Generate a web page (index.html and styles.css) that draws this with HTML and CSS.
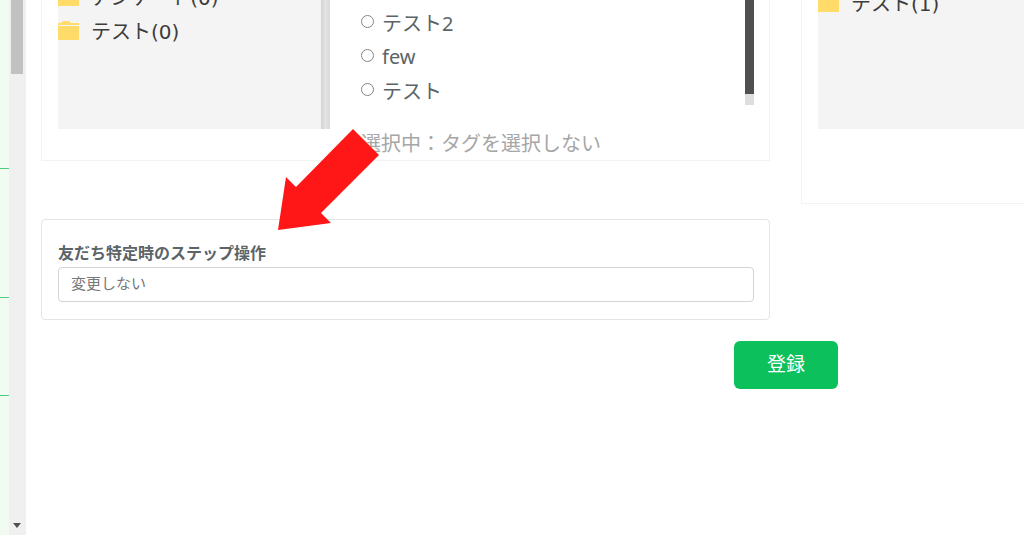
FILE: index.html
```html
<!DOCTYPE html>
<html lang="ja">
<head>
<meta charset="utf-8">
<title>友だち特定時の設定</title>
<link rel="stylesheet" href="styles.css">
</head>
<body>
<div class="app">
  <aside class="sidebar">
    <div class="side-item side-first"></div>
    <div class="side-item side-second"></div>
    <div class="side-item side-third"></div>
  </aside>
  <div class="page-scroll">
    <div class="page-thumb"></div>
    <svg class="scroll-down" viewBox="0 0 8 5" aria-hidden="true"><path d="M0 0H8L4 5Z"/></svg>
  </div>
  <main class="main">
    <div class="columns">
      <div class="column">
        <section class="panel">
          <div class="folders">
            <ul class="folder-list">
              <li class="folder"><svg class="folder-icon" viewBox="0 0 21 19" aria-hidden="true"><path d="M0 5H21V19H0ZM0 2H3L5 0H11L13 2H21V4H0Z"/></svg>アンケート(0)</li>
              <li class="folder"><svg class="folder-icon" viewBox="0 0 21 19" aria-hidden="true"><path d="M0 5H21V19H0ZM0 2H3L5 0H11L13 2H21V4H0Z"/></svg>テスト(0)</li>
            </ul>
            <div class="folder-track"></div>
          </div>
          <div class="tags">
            <div class="tag-box">
              <div class="tag-list">
                <label class="tag"><input class="radio" type="radio" name="tag">テスト2</label>
                <label class="tag"><input class="radio" type="radio" name="tag">few</label>
                <label class="tag"><input class="radio" type="radio" name="tag">テスト</label>
              </div>
              <div class="tag-track"><div class="tag-thumb"></div></div>
            </div>
            <p class="selected">選択中：タグを選択しない</p>
          </div>
        </section>
        <section class="card">
          <label class="card-label" for="step">友だち特定時のステップ操作</label>
          <select class="select" id="step"><option>変更しない</option></select>
        </section>
      </div>
      <section class="panel panel-side">
        <div class="folders folders-side">
          <ul class="folder-list folder-list-side">
            <li class="folder"><svg class="folder-icon" viewBox="0 0 21 19" aria-hidden="true"><path d="M0 5H21V19H0ZM0 2H3L5 0H11L13 2H21V4H0Z"/></svg>テスト(1)</li>
          </ul>
        </div>
      </section>
    </div>
    <div class="actions"><button class="submit" type="button">登録</button></div>
  </main>
  <svg class="arrow" viewBox="0 0 101 101" aria-hidden="true"><path d="M75 0L101 26L43 84L53 94L0 101L8 48L18 58Z"/></svg>
</div>
</body>
</html>
```

FILE: styles.css
```css
* {
  box-sizing: border-box;
}

body {
  margin: 0;
  background: #fff;
  color: #5b6467;
  font-family: "Noto Sans", "Noto Sans CJK JP", sans-serif;
  font-size: 20px;
}

.app {
  position: relative;
  display: flex;
  height: 100vh;
  padding-bottom: 3px;
  overflow: hidden;
}

.sidebar {
  width: 9px;
  flex: none;
  background: #f2fbf2;
}

.side-item {
  border-bottom: 1px solid #4fcb85;
}

.side-first {
  height: 169px;
}

.side-second {
  height: 129px;
}

.side-third {
  height: 98px;
}

.page-scroll {
  display: flex;
  flex: none;
  flex-direction: column;
  align-items: center;
  justify-content: space-between;
  width: 17px;
  padding: 0 3px 7px 2px;
  background: #f0f0f0;
}

.page-thumb {
  width: 12px;
  height: 74px;
  background: #c1c1c1;
}

.scroll-down {
  width: 8px;
  height: 5px;
  fill: #505050;
}

.main {
  flex: 1;
  min-width: 0;
  padding-left: 15px;
}

.columns {
  display: grid;
  grid-template-columns: minmax(0, 729fr) minmax(0, 223fr);
  gap: 31px;
  align-items: start;
}

.panel {
  display: flex;
  gap: 31px;
  padding: 0 15px 0 16px;
  border: 1px solid #f2f2f2;
  border-top: 0;
}

.panel-side {
  padding: 0 0 74px 16px;
  border-right: 0;
}

.folders {
  display: flex;
  width: 272px;
  height: 129px;
  overflow: hidden;
  background: #f4f4f4;
}

.folders-side {
  width: 100%;
}

.folder-list {
  flex: 1;
  margin: -21px 0 0;
  padding: 0;
  list-style: none;
}

.folder-list-side {
  margin-top: -15px;
}

.folder {
  display: flex;
  align-items: center;
  gap: 12px;
  height: 34px;
  color: #3c3c3c;
  font-family: "DejaVu Sans", "Noto Sans CJK JP", sans-serif;
  white-space: nowrap;
}

.folder-icon {
  width: 21px;
  height: 19px;
  fill: #ffdb69;
}

.folder-track {
  width: 9px;
  background: linear-gradient(90deg, #d2d2d2, #e4e4e4 50%, #d9d9d9);
}

.tags {
  flex: 1;
}

.tag-box {
  display: flex;
  justify-content: space-between;
  height: 105px;
  margin-bottom: 24px;
}

.tag-list {
  padding-top: 5px;
}

.tag {
  display: flex;
  align-items: center;
  gap: 8px;
  height: 34px;
}

.radio {
  width: 13px;
  height: 13px;
  margin: 0 0 2px;
  appearance: none;
  border: 1px solid #858585;
  border-radius: 50%;
  background: #fff;
}

.tag-track {
  width: 9px;
  background: #dedede;
}

.tag-thumb {
  height: 94px;
  background: #505050;
}

.selected {
  margin: 0;
  padding-bottom: 1px;
  color: #a6a6a6;
  line-height: 30px;
}

.card {
  margin-top: 58px;
  padding: 21px 15px 17px 16px;
  border: 1px solid #e4e4e4;
  border-radius: 4px;
}

.card-label {
  display: block;
  margin-bottom: 2px;
  font-size: 16px;
  font-weight: 700;
  line-height: 24px;
}

.select {
  display: block;
  width: 100%;
  height: 35px;
  padding: 0 12px 3px;
  appearance: none;
  border: 1px solid #d4d4d4;
  border-radius: 4px;
  background: #fff;
  color: #777;
  font-family: inherit;
  font-size: 15px;
}

.actions {
  display: flex;
  justify-content: flex-end;
  padding: 21px 186px 0 0;
}

.submit {
  width: 104px;
  height: 48px;
  padding: 0 0 4px;
  border: 0;
  border-radius: 6px;
  background: #0cc05b;
  color: #fff;
  font-family: inherit;
  font-size: 19px;
}

.arrow {
  position: absolute;
  top: 129px;
  left: 278px;
  width: 101px;
  height: 101px;
  fill: #ff1717;
}
```
